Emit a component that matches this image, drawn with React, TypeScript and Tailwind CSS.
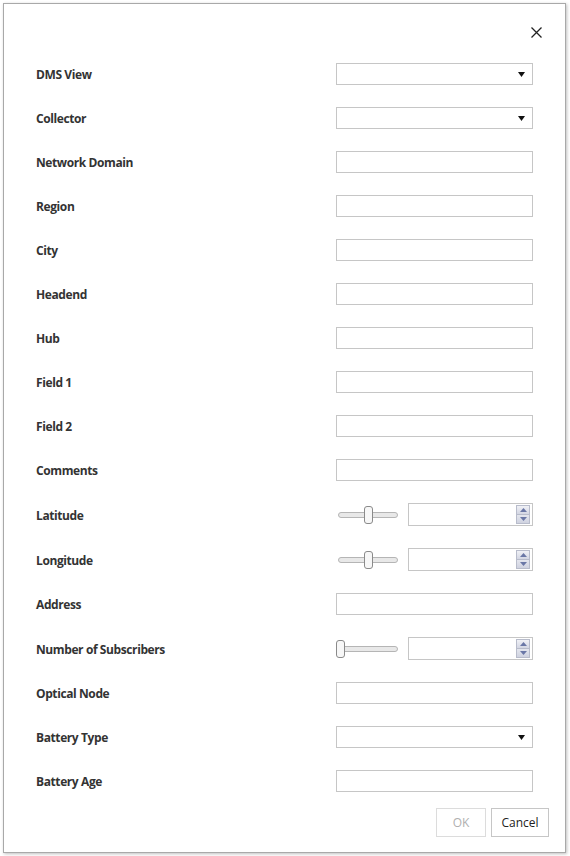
import React from "react";

type RowKind = "select" | "text" | "slider";
const rows: { label: string; kind: RowKind; h: number; thumb?: number }[] = [
  { label: "DMS View", kind: "select", h: 44 },
  { label: "Collector", kind: "select", h: 44 },
  { label: "Network Domain", kind: "text", h: 44 },
  { label: "Region", kind: "text", h: 44 },
  { label: "City", kind: "text", h: 44 },
  { label: "Headend", kind: "text", h: 44 },
  { label: "Hub", kind: "text", h: 44 },
  { label: "Field 1", kind: "text", h: 44 },
  { label: "Field 2", kind: "text", h: 44 },
  { label: "Comments", kind: "text", h: 44 },
  { label: "Latitude", kind: "slider", h: 45, thumb: 28 },
  { label: "Longitude", kind: "slider", h: 45, thumb: 28 },
  { label: "Address", kind: "text", h: 44 },
  { label: "Number of Subscribers", kind: "slider", h: 45, thumb: 0 },
  { label: "Optical Node", kind: "text", h: 44 },
  { label: "Battery Type", kind: "select", h: 44 },
  { label: "Battery Age", kind: "text", h: 44 },
];

function Select() {
  return (
    <div className="w-[197px] h-[22px] border border-[#c6c6c6] bg-white flex items-center justify-end pr-[7px]">
      <svg width="7" height="5" viewBox="0 0 7 5">
        <path d="M0 0 H7 L3.5 5 Z" fill="#111" />
      </svg>
    </div>
  );
}

function TextBox() {
  return <div className="w-[197px] h-[22px] border border-[#c6c6c6] bg-white" />;
}

function Spinner() {
  return (
    <div className="w-[125px] h-[23px] border border-[#c6c6c6] bg-white flex justify-end items-center pr-[2px]">
      <div className="w-[14px] h-[19px] flex flex-col border border-[#b8bccb]">
        <div className="flex-1 flex items-center justify-center bg-[linear-gradient(#f0f1f6,#d3d6e3)] border-b border-[#b8bccb]">
          <svg width="7" height="4" viewBox="0 0 7 4">
            <path d="M0 4 L3.5 0 L7 4 Z" fill="#6a77a6" />
          </svg>
        </div>
        <div className="flex-1 flex items-center justify-center bg-[linear-gradient(#e4e6ee,#cfd2e0)]">
          <svg width="7" height="4" viewBox="0 0 7 4">
            <path d="M0 0 L7 0 L3.5 4 Z" fill="#6a77a6" />
          </svg>
        </div>
      </div>
    </div>
  );
}

function Slider({ thumb }: { thumb: number }) {
  return (
    <div className="flex items-center gap-[10px]">
      <div className="relative w-[62px] h-[18px]">
        <div className="absolute left-[2px] right-0 top-[6px] h-[6px] rounded-full bg-[#e8e8e8] border border-[#b5b5b5]" />
        <div
          className="absolute top-0 w-[9px] h-[18px] rounded-[3px] border border-[#8a8a8a] bg-[#f7f7f7]"
          style={{ left: thumb }}
        />
      </div>
      <Spinner />
    </div>
  );
}

export default function App() {
  return (
    <div
      className="w-[570px] h-[856px] bg-white pt-[3px] pl-[3px]"
      style={{ fontFamily: '"Open Sans", "Noto Sans", sans-serif' }}
    >
      <div className="w-[563px] h-[850px] border border-[#a9a9a9] bg-white shadow-[1px_1px_3px_rgba(0,0,0,0.25)] flex flex-col">
        <div className="h-[48px] flex justify-end pt-[23px] pr-[23px]">
          <svg width="11" height="11" viewBox="0 0 11 11">
            <path d="M0.5 0.5 L10.5 10.5 M10.5 0.5 L0.5 10.5" stroke="#222" strokeWidth="1.3" />
          </svg>
        </div>
        <div className="flex flex-col pl-[32px] pr-[32px]">
          {rows.map((r) => (
            <div
              key={r.label}
              className={`flex items-center justify-between ${r.h === 45 ? "h-[45px]" : "h-[44px]"}`}
            >
              <span className="pt-[2px] text-[12px] font-bold text-[#333] tracking-[-0.4px]">{r.label}</span>
              {r.kind === "select" && <Select />}
              {r.kind === "text" && <TextBox />}
              {r.kind === "slider" && <Slider thumb={r.thumb ?? 0} />}
            </div>
          ))}
        </div>
        <div className="flex justify-end gap-[5px] pr-[16px] pt-[5px]">
          <div className="w-[50px] h-[29px] border border-[#dcdcdc] flex items-center justify-center text-[12px] text-[#b0b0b0]">
            OK
          </div>
          <div className="w-[58px] h-[29px] border border-[#c6c6c6] flex items-center justify-center text-[12px] text-[#222]">
            Cancel
          </div>
        </div>
      </div>
    </div>
  );
}
